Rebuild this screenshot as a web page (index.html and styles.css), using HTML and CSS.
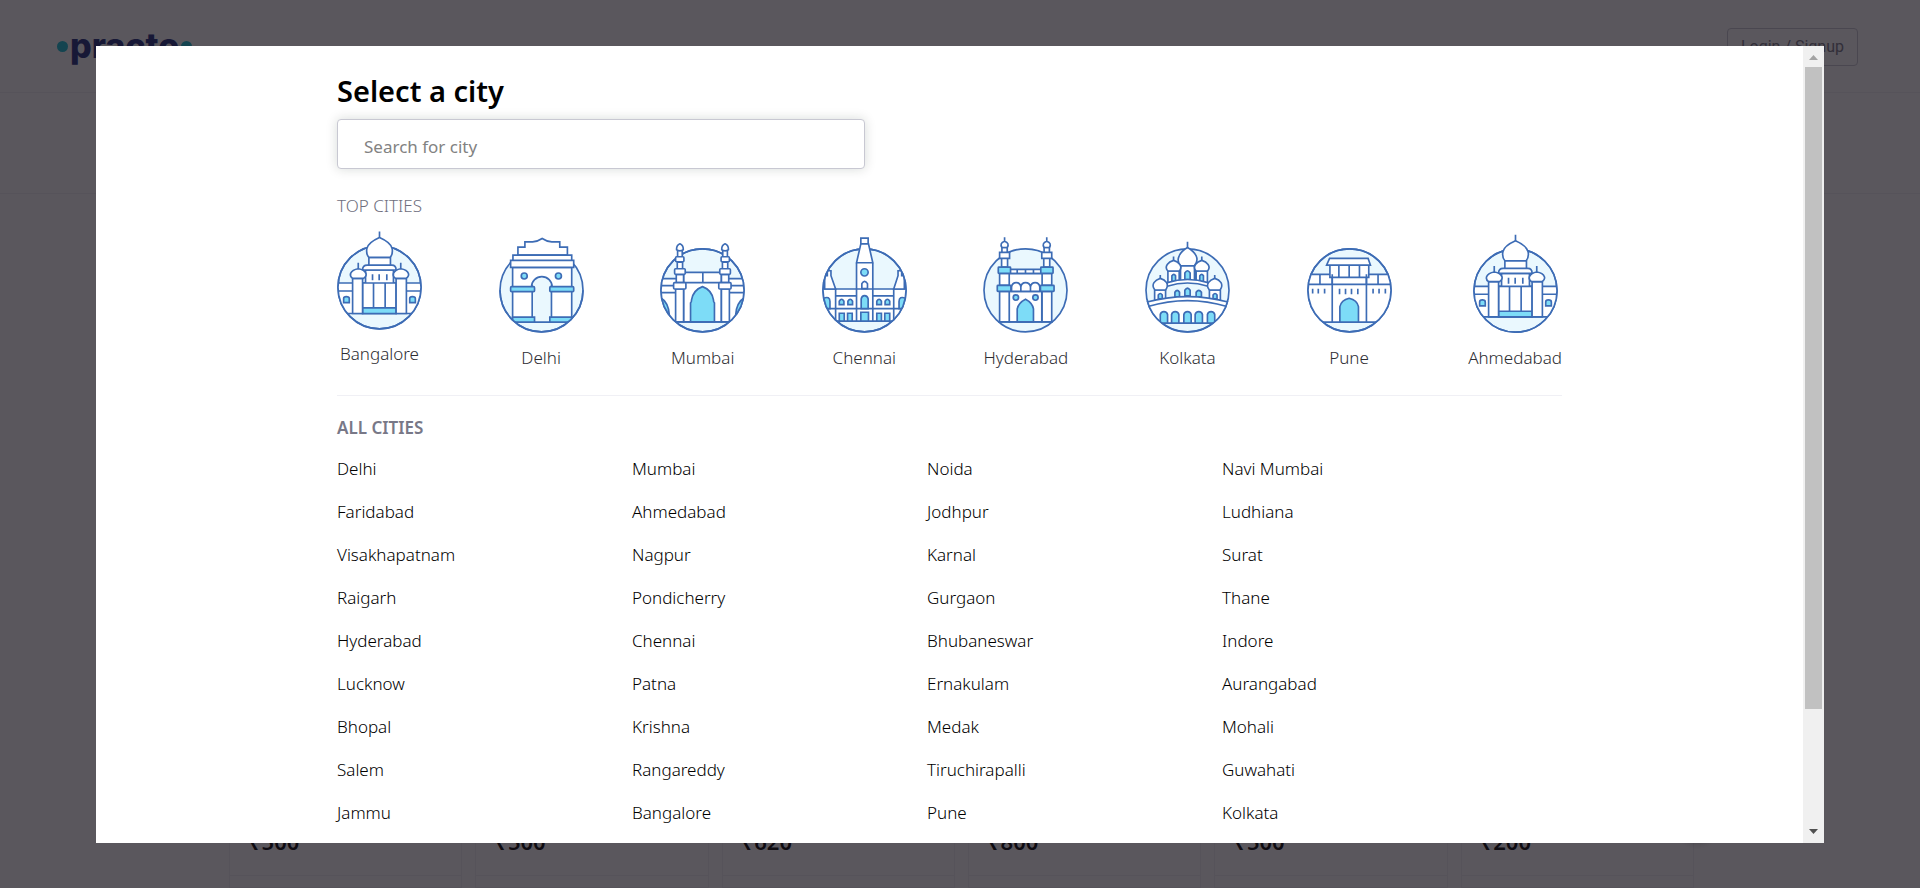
FILE: index.html
```html
<!DOCTYPE html>
<html lang="en">
<head>
<meta charset="utf-8">
<title>Practo</title>
<link rel="stylesheet" href="styles.css">
</head>
<body>
<div class="page">
  <header class="site-header">
    <a class="logo" href="#" aria-label="practo"><i class="logo-dot"></i><span>practo</span><i class="logo-dot"></i></a>
    <button class="login" type="button">Login / Signup</button>
  </header>
  <div class="subnav"></div>
  <main class="plans">
    <article class="plan"><p class="price">₹500</p></article>
    <article class="plan"><p class="price">₹500</p></article>
    <article class="plan"><p class="price">₹620</p></article>
    <article class="plan"><p class="price">₹800</p></article>
    <article class="plan"><p class="price">₹500</p></article>
    <article class="plan"><p class="price">₹200</p></article>
    <button class="next" type="button" aria-label="Next"></button>
  </main>
</div>

<div class="overlay">
  <section class="modal" role="dialog" aria-labelledby="title">
    <div class="modal-body">
      <div class="content">
        <h1 class="title" id="title">Select a city</h1>
        <input class="search" type="text" placeholder="Search for city" aria-label="Search for city">
        <h2 class="subtitle">TOP CITIES</h2>
        <div class="top-cities">
          <a class="city" href="#">
            <svg class="art" viewBox="51 48 256 294" height="98">
              <defs>
                <clipPath id="c1"><circle cx="179" cy="217" r="125"/></clipPath>
                <g id="palace">
                  <circle class="sky" cx="179" cy="217" r="125"/>
                  <g clip-path="url(#c1)">
                    <path class="w" d="M40 204H320V296H40ZM40 228H320"/>
                    <path class="c" d="M71 263V251Q71 245 79 245Q88 245 88 251V263ZM270 263V251Q270 245 278 245Q287 245 287 251V263Z"/>
                  </g>
                  <circle class="ring" cx="179" cy="217" r="125"/>
                  <path class="w" d="M137 165H221V204H137ZM128 204H229V296H128ZM161 204V279M196 204V279"/>
                  <path class="c" d="M128 279H229V296H128Z"/>
                  <path class="n" d="M158 178V196M178 178V196M201 178V196"/>
                  <path class="w" d="M98 190H128V296H98ZM229 190H260V296H229Z"/>
                  <path class="w" d="M147 127H212V150H147ZM128 165Q128 150 142 150H216Q229 150 229 165Z"/>
                  <path class="w" d="M147 127Q138 117 141 100Q145 82 179 67Q213 82 217 100Q220 117 211 127Z"/>
                  <path class="w" d="M98 190Q89 184 92 175Q97 164 115 161Q134 164 138 175Q141 184 131 190ZM227 190Q218 184 221 175Q226 164 243 161Q262 164 266 175Q269 184 259 190Z"/>
                  <path class="n" d="M179 49V68M115 143V162M243 143V162"/>
                </g>
              </defs>
              <use href="#palace"/>
            </svg>
            <span>Bangalore</span>
          </a>
          <a class="city" href="#">
            <svg class="art" viewBox="533 48 256 306" height="102">
              <clipPath id="c2"><path d="M500 40H820V226H786A125 125 0 0 1 536 226H500Z"/></clipPath>
              <circle class="sky" cx="661" cy="226" r="125"/>
              <g clip-path="url(#c2)">
                <path class="w" d="M574 157H752V322H574Z"/>
                <path class="s" d="M631 322V213A30 28 0 0 1 693 213V322Z"/>
                <path class="n" d="M633 322V211M691 211V322M631 215A31 30 0 0 1 693 215M574 322H752"/>
                <path class="c" d="M574 307H640V322H574ZM686 307H752V322H686Z"/>
              </g>
              <path class="ring" d="M786 226A125 125 0 0 1 536 226"/>
              <rect class="c" x="568" y="215" width="72" height="15" rx="3"/>
              <rect class="c" x="686" y="215" width="72" height="15" rx="3"/>
              <circle class="c" cx="609" cy="183" r="9"/><circle class="c" cx="712" cy="183" r="9"/>
              <path class="w" d="M590 120V96H611V80H634Q650 79 663 70Q676 79 692 80H716V96H739V120Z"/>
              <path class="w" d="M575 120H752V136H575ZM568 136H758V157H568Z"/>
            </svg>
            <span>Delhi</span>
          </a>
          <a class="city" href="#">
            <svg class="art" viewBox="60 48 256 306" height="102">
              <clipPath id="c3"><circle cx="188" cy="226" r="125"/></clipPath>
              <circle class="sky" cx="188" cy="226" r="125"/>
              <g clip-path="url(#c3)">
                <path class="w" d="M40 191H340V321H40ZM40 212H110M40 233H110M266 212H340M266 233H340"/>
                <path class="c" d="M60 247Q86 262 88 300H60ZM316 247Q290 262 288 300H316Z"/>
                <path class="w" d="M131 172H245V321H131ZM131 203H245M189 172V203"/>
                <path class="c" d="M152 321V264Q155 262 155 255Q160 225 188 215Q216 225 221 255Q221 262 224 264V321Z"/>
                <path class="w" d="M107 222H131V321H107ZM245 222H269V321H245Z"/>
              </g>
              <circle class="ring" cx="188" cy="226" r="125"/>
              <path class="w" d="M109 178H131V203H109ZM112 141H128V161H112ZM113 107H127V125H113ZM110 104Q109 90 120 86Q131 90 130 104Q120 110 110 104Z"/>
              <path class="w" d="M245 178H267V203H245ZM248 141H264V161H248ZM249 107H263V125H249ZM246 104Q245 90 256 86Q267 90 266 104Q256 110 246 104Z"/>
              <g class="w"><rect x="101" y="203" width="37" height="19" rx="3"/><rect x="104" y="161" width="32" height="17" rx="3"/><rect x="107" y="125" width="25" height="15" rx="3"/>
              <rect x="237" y="203" width="37" height="19" rx="3"/><rect x="240" y="161" width="32" height="17" rx="3"/><rect x="244" y="125" width="25" height="15" rx="3"/></g>
            </svg>
            <span>Mumbai</span>
          </a>
          <a class="city" href="#">
            <svg class="art" viewBox="544 48 256 306" height="102">
              <clipPath id="c4"><circle cx="672" cy="226" r="125"/></clipPath>
              <circle class="sky" cx="672" cy="226" r="125"/>
              <g clip-path="url(#c4)">
                <path class="w" d="M520 222H820V319H520ZM520 281H820M585 222V319M760 222V319M585 243H760"/>
                <path class="w" d="M552 222V182H560V167H571V182L585 222ZM792 222V182H784V167H773V182L760 222Z"/>
                <path class="c" d="M548 281V250Q568 242 568 260V281ZM796 281V250Q776 242 776 260V281Z"/>
              </g>
              <circle class="ring" cx="672" cy="226" r="125"/>
              <path class="c" d="M596 269V259Q603 247 610 259V269ZM622 269V259Q629 247 636 259V269ZM709 269V259Q716 247 723 259V269ZM734 269V259Q741 247 748 259V269Z"/>
              <path class="c" d="M596 295H611V319H596ZM621 295H635V319H621ZM709 295H723V319H709ZM733 295H748V319H733Z"/>
              <path class="w" d="M648 143H697V319H648ZM661 86L648 143H697L684 86ZM661 69H683V86H661ZM648 222H697M648 281H697"/>
              <circle class="c" cx="672" cy="172" r="11"/>
              <path class="w" d="M664 221V206Q672 192 681 206V221Z"/>
              <path class="c" d="M662 281V252Q664 242 672 242Q681 242 683 252V281ZM661 292H684V319H661Z"/>
            </svg>
            <span>Chennai</span>
          </a>
          <a class="city" href="#">
            <svg class="art" viewBox="72 48 256 306" height="102">
              <circle class="sky" cx="200" cy="226" r="125"/>
              <path class="w" d="M151 163H249V176H151ZM175 163V176M200 163V176M224 163V176"/>
              <path class="wf" d="M151 176H249V229H151Z"/>
              <path class="n" d="M151 176H249"/>
              <path class="w" d="M151 229H249V321H151Z"/>
              <path class="w" d="M158 229V216Q160 203 172 203Q184 203 186 216V229ZM186 229V216Q188 203 200 203Q213 203 215 216V229ZM215 229V216Q217 203 229 203Q241 203 243 216V229Z"/>
              <circle class="c" cx="171" cy="248" r="8"/><circle class="c" cx="230" cy="248" r="8"/>
              <path class="c" d="M175 321V282Q179 264 200 253Q221 264 224 282V321Z"/>
              <g id="minar">
                <path class="w" d="M129 97H145V112H129ZM122 112H152V130H122ZM128 130H146V156H128ZM122 175H151V211H122ZM122 229H151V321H122Z"/>
                <path class="w" d="M129 97Q121 84 137 78Q153 84 145 97ZM137 66V78"/>
                <rect class="c" x="118" y="156" width="37" height="19" rx="2"/><rect class="c" x="115" y="211" width="41" height="18" rx="2"/>
              </g>
              <use href="#minar" transform="matrix(-1 0 0 1 401 0)"/>
              <path class="n" d="M118 321H282"/>
            </svg>
            <span>Hyderabad</span>
          </a>
          <a class="city" href="#">
            <svg class="art" viewBox="557 48 256 306" height="102">
              <clipPath id="c6"><circle cx="685" cy="226" r="125"/></clipPath>
              <circle class="sky" cx="685" cy="226" r="125"/>
              <path class="w" d="M664 152H706V205H664ZM626 168H660V210H626ZM711 168H745V210H711Z"/>
              <path class="c" d="M677 194V174Q685 160 693 174V194ZM638 200V182Q644 174 649 182V200ZM722 200V182Q728 174 733 182V200Z"/>
              <path class="w" d="M664 152Q652 138 660 122Q666 108 685 97Q704 108 711 122Q718 138 706 152Z"/>
              <path class="w" d="M626 168Q617 158 624 148Q630 140 643 136Q656 140 662 148Q669 158 660 168ZM711 168Q702 158 709 148Q715 140 728 136Q741 140 747 148Q754 158 745 168Z"/>
              <path class="s" d="M624 212Q685 190 747 212V255H624Z"/>
              <path class="w" d="M624 203Q685 184 747 203V214Q685 194 624 214Z"/>
              <path class="c" d="M647 246V232Q654 220 661 232V246ZM677 243V226Q685 213 693 226V243ZM711 246V232Q719 220 727 232V246Z"/>
              <path class="w" d="M586 225H619V256H586ZM751 225H784V256H751Z"/>
              <path class="c" d="M597 252V240Q603 231 609 240V252ZM762 252V240Q768 231 774 240V252Z"/>
              <path class="w" d="M587 225Q577 214 584 203Q590 194 603 190Q616 194 622 203Q628 214 619 225ZM751 225Q741 214 748 203Q754 194 767 190Q780 194 786 203Q792 214 783 225Z"/>
              <path class="n" d="M685 80V98M643 124V136M728 124V136M603 180V191M767 180V191"/>
              <g clip-path="url(#c6)">
                <path class="w" d="M560 262Q685 228 810 262V325H560ZM566 275Q685 239 804 275"/>
                <path class="c" d="M603 325V299Q605 290 614 290Q623 290 625 299V325ZM637 325V299Q639 290 648 290Q657 290 659 299V325ZM674 325V299Q676 290 685 290Q694 290 696 299V325ZM708 325V299Q710 290 719 290Q728 290 730 299V325ZM745 325V299Q747 290 756 290Q765 290 767 299V325Z"/>
              </g>
              <path class="ring" d="M806 258A125 125 0 0 1 564 258"/>
            </svg>
            <span>Kolkata</span>
          </a>
          <a class="city" href="#">
            <svg class="art" viewBox="53 48 256 306" height="102">
              <clipPath id="c7"><circle cx="181" cy="226" r="125"/></clipPath>
              <circle class="sky" cx="181" cy="226" r="125"/>
              <g clip-path="url(#c7)">
                <path class="w" d="M40 178H320V322H40ZM92 178V208M267 178V208"/>
                <path class="w" d="M129 178H232V322H129ZM40 208H320"/>
                <path class="w" d="M122 150H239V187H122ZM149 150V187M180 150V187M211 150V187"/>
                <path class="n" d="M129 178V208M232 178V208M70 221V236M87 221V236M106 221V236M151 221V238M169 221V238M187 221V238M206 221V238M252 221V236M270 221V236M289 221V236"/>
              </g>
              <circle class="ring" cx="181" cy="226" r="125"/>
              <path class="w" d="M121 130H237L244 150H112Z"/>
              <path class="c" d="M152 322V275Q156 256 180 250Q204 256 208 275V322Z"/>
            </svg>
            <span>Pune</span>
          </a>
          <a class="city" href="#">
            <svg class="art" viewBox="51 38 256 306" height="102"><use href="#palace"/></svg>
            <span>Ahmedabad</span>
          </a>
        </div>
        <h2 class="subtitle strong">ALL CITIES</h2>
        <div class="all-cities">
          <a href="#">Delhi</a><a href="#">Mumbai</a><a href="#">Noida</a><a href="#">Navi Mumbai</a>
          <a href="#">Faridabad</a><a href="#">Ahmedabad</a><a href="#">Jodhpur</a><a href="#">Ludhiana</a>
          <a href="#">Visakhapatnam</a><a href="#">Nagpur</a><a href="#">Karnal</a><a href="#">Surat</a>
          <a href="#">Raigarh</a><a href="#">Pondicherry</a><a href="#">Gurgaon</a><a href="#">Thane</a>
          <a href="#">Hyderabad</a><a href="#">Chennai</a><a href="#">Bhubaneswar</a><a href="#">Indore</a>
          <a href="#">Lucknow</a><a href="#">Patna</a><a href="#">Ernakulam</a><a href="#">Aurangabad</a>
          <a href="#">Bhopal</a><a href="#">Krishna</a><a href="#">Medak</a><a href="#">Mohali</a>
          <a href="#">Salem</a><a href="#">Rangareddy</a><a href="#">Tiruchirapalli</a><a href="#">Guwahati</a>
          <a href="#">Jammu</a><a href="#">Bangalore</a><a href="#">Pune</a><a href="#">Kolkata</a>
        </div>
      </div>
    </div>
    <div class="scrollbar" aria-hidden="true">
      <svg class="arrow" viewBox="0 0 21 21"><path d="M6 14L10.500 9L15 14Z" fill="#a3a3a3"/></svg>
      <div class="track"><div class="thumb"></div></div>
      <svg class="arrow" viewBox="0 0 21 21"><path d="M6 7L10.500 12L15 7Z" fill="#505050"/></svg>
    </div>
  </section>
</div>
</body>
</html>
```

FILE: styles.css
```css
* { box-sizing: border-box; }
body {
  margin: 0;
  height: 100vh;
  overflow: hidden;
  font-family: "Noto Sans", "Open Sans", sans-serif;
  font-size: 17px;
  line-height: 24px;
  color: #000;
  background: #fff;
}
h1, h2, p { margin: 0; }
a { color: inherit; text-decoration: none; }

.page { height: 100vh; display: flex; flex-direction: column; }
.site-header {
  height: 93px;
  flex: none;
  display: flex;
  align-items: center;
  justify-content: space-between;
  padding: 2px 62px 0 57px;
  border-bottom: 1px solid #f0f0f5;
}
.logo {
  display: flex;
  align-items: center;
  gap: 2px;
  padding-bottom: 2px;
  font-family: Inter, sans-serif;
  font-weight: 800;
  font-size: 34px;
  line-height: 36px;
  color: #202c7c;
}
.logo-dot { width: 11px; height: 11px; border-radius: 50%; background: #14bed2; }
.login {
  height: 38px;
  padding: 0 13px;
  font: 16px/24px Roboto, sans-serif;
  color: #787887;
  background: transparent;
  border: 1px solid #c8c8d2;
  border-radius: 4px;
}
.subnav { height: 101px; flex: none; border-bottom: 1px solid #f0f0f5; }
.plans {
  position: relative;
  flex: 1;
  display: grid;
  grid-template-columns: repeat(6, 1fr);
  gap: 13px;
  padding: 0 226px 0 229px;
}
.plan { display: flex; flex-direction: column; border: 1px solid #f0f0f5; border-top: 0; }
.price {
  margin-top: auto;
  margin-bottom: 11px;
  padding: 0 19px 22px;
  border-bottom: 1px solid #f0f0f5;
  font-size: 22px;
  font-weight: 600;
}
.next {
  position: absolute;
  right: 203px;
  bottom: 46px;
  width: 40px;
  height: 40px;
  border: 0;
  border-radius: 50%;
  background: #fff;
  box-shadow: 0 2px 6px rgba(0, 0, 0, .2);
}

.overlay {
  position: fixed;
  inset: 0;
  display: flex;
  padding: 46px 5% 45px;
  background: rgba(20, 16, 24, .7);
}
.modal { flex: 1; display: flex; overflow: hidden; background: #fff; }
.modal-body { flex: 1; overflow: hidden; padding: 27px 24px 0; }
.content { max-width: 1225px; margin: 0 auto; }
.title { font-size: 29px; line-height: 36px; font-weight: 600; }
.search {
  display: block;
  width: 528px;
  max-width: 100%;
  height: 50px;
  margin-top: 10px;
  padding: 4px 26px 0;
  font: inherit;
  border: 1px solid #c8c8d2;
  border-radius: 4px;
  box-shadow: 0 0 12px rgba(0, 30, 20, .16);
}
.search::placeholder { color: #828282; }
.subtitle { margin-top: 25px; font-size: 17px; line-height: 24px; font-weight: 300; color: #6e6e7d; }
.strong { margin-top: 20px; font-weight: 600; color: #787887; }
.top-cities {
  display: flex;
  justify-content: space-between;
  align-items: flex-start;
  margin-top: 13px;
  padding-bottom: 25px;
  border-bottom: 1px solid #f0f0f5;
}
.city {
  min-width: 85px;
  display: flex;
  flex-direction: column;
  align-items: center;
  gap: 13px;
  font-weight: 300;
  color: #2d2d32;
}
.art { display: block; width: 85px; stroke: #3d6cb5; stroke-width: 5; overflow: visible; }
.sky, .s { fill: #eaf8fe; }
.s { stroke: none; }
.ring, .n { fill: none; }
.w { fill: #fff; }
.wf { fill: #fff; stroke: none; }
.c { fill: #7ddcf7; }
.all-cities {
  display: grid;
  grid-template-columns: repeat(4, 1fr);
  grid-auto-rows: 43px;
  align-items: center;
  margin-top: 7px;
  padding-right: 45px;
  font-weight: 300;
}
.scrollbar { width: 21px; flex: none; display: flex; flex-direction: column; background: #f0f0f0; }
.arrow { width: 21px; height: 21px; display: block; }
.track { flex: 1; padding: 0 2px; }
.thumb { height: 85%; background: #c1c1c1; }
```
